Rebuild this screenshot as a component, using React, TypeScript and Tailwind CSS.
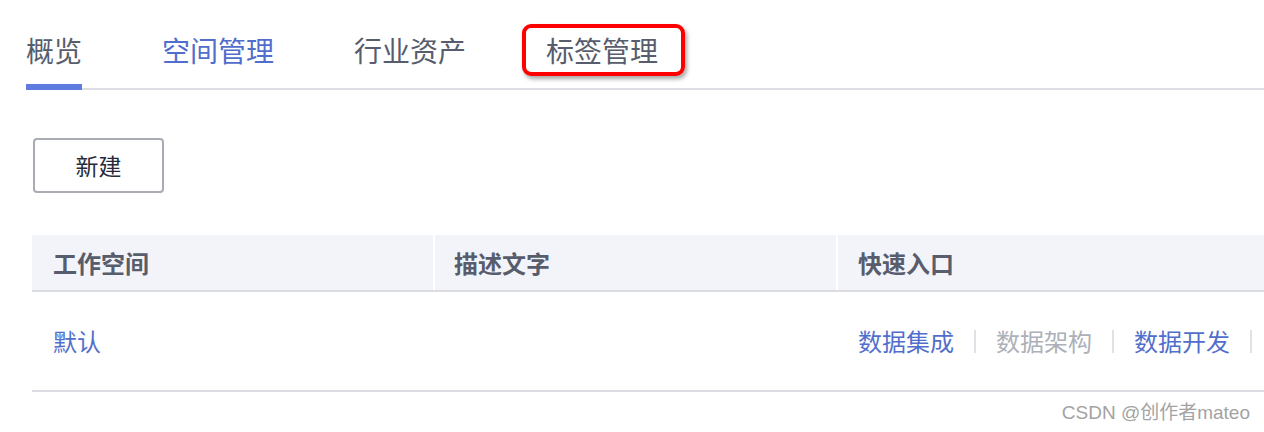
import React from "react";

const font = { fontFamily: '"Noto Sans CJK SC", "Noto Sans", sans-serif' };

export default function App() {
  const tabs = ["概览", "空间管理", "行业资产", "标签管理"];
  return (
    <div className="relative w-[1264px] h-[432px] overflow-hidden bg-white" style={font}>
      <div className="pl-[26px] pt-[30px]">
        <div className="flex gap-[80px] border-b-2 border-[#dcdee3]">
          {tabs.map((t, i) => (
            <div key={t} className="relative">
              <div
                className={
                  "text-[28px] leading-[40px] pb-[18px] " +
                  (i === 1 ? "text-[#526ecc]" : "text-[#575d6c]")
                }
              >
                {t}
              </div>
              {i === 0 && <div className="absolute left-0 right-0 -bottom-[2px] h-[6px] bg-[#5e7ce0]" />}
              {i === 3 && (
                <div className="absolute -left-[24px] -right-[27px] top-[-6px] h-[52px] border-[4px] border-[#ff0000] rounded-[9px] shadow-[2px_3px_4px_rgba(0,0,0,0.35)]" />
              )}
            </div>
          ))}
        </div>
      </div>

      <div className="pl-[33px] pt-[48px]">
        <button className="w-[131px] h-[55px] border-2 border-[#a9acb2] rounded-[4px] text-[23px] text-[#252b3a] bg-white">
          新建
        </button>
      </div>

      <div className="pl-[32px] pt-[42px]">
        <div className="w-[1300px]">
          <div className="flex h-[57px] bg-[#f3f4f9] border-b-2 border-[#dcdde3] text-[24px] font-bold text-[#575d6c]">
            <div className="w-[401px] pl-[21px] flex items-center">工作空间</div>
            <div className="w-[2px] bg-white" />
            <div className="w-[401px] pl-[19px] flex items-center">描述文字</div>
            <div className="w-[2px] bg-white" />
            <div className="flex-1 pl-[20px] flex items-center">快速入口</div>
          </div>
          <div className="flex h-[100px] border-b-2 border-[#dcdde3] text-[24px]">
            <div className="w-[401px] pl-[21px] flex items-center text-[#526ecc]">默认</div>
            <div className="w-[2px]" />
            <div className="w-[401px]" />
            <div className="w-[2px]" />
            <div className="flex-1 pl-[20px] flex items-center">
              <span className="text-[#526ecc]">数据集成</span>
              <span className="mx-[20px] w-[2px] h-[23px] bg-[#dfe1e6]" />
              <span className="text-[#adb0b8]">数据架构</span>
              <span className="mx-[20px] w-[2px] h-[23px] bg-[#dfe1e6]" />
              <span className="text-[#526ecc]">数据开发</span>
              <span className="mx-[20px] w-[2px] h-[23px] bg-[#dfe1e6]" />
            </div>
          </div>
        </div>
      </div>

      <div
        className="absolute right-[14px] top-[400px] text-[19px] leading-[26px] text-[#a3a3a3]"
        style={{ fontFamily: '"Liberation Sans", "Noto Sans CJK SC", sans-serif' }}
      >
        CSDN @创作者mateo
      </div>
    </div>
  );
}
